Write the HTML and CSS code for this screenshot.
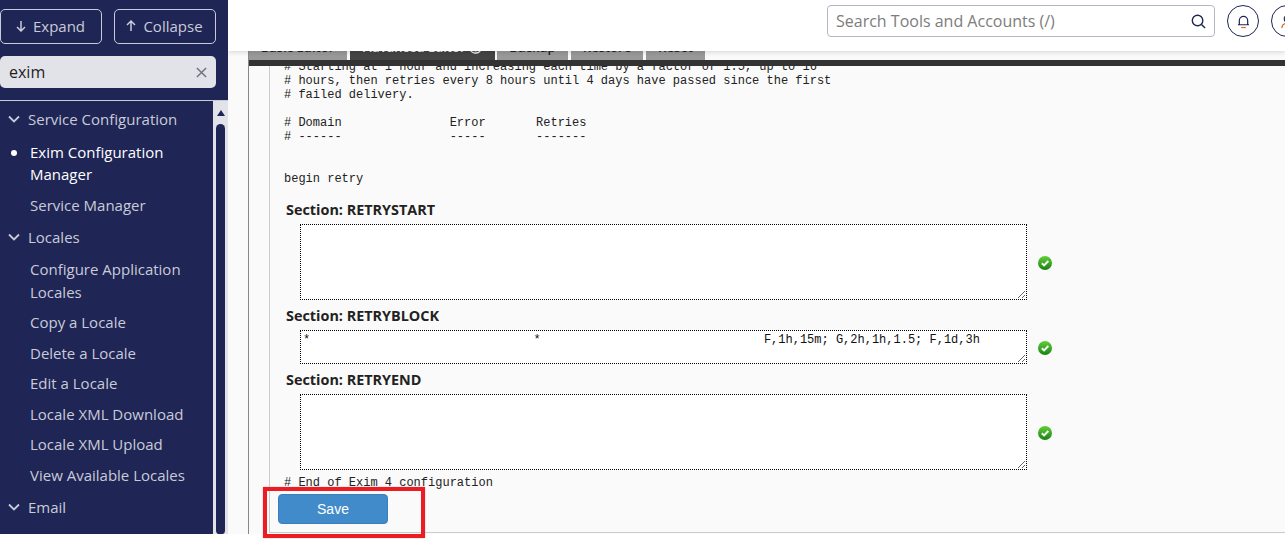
FILE: index.html
```html
<!DOCTYPE html>
<html lang="en">
<head>
<meta charset="utf-8">
<title>Exim Configuration Manager</title>
<link rel="stylesheet" href="styles.css">
</head>
<body>
<div class="app">
  <aside class="sidebar">
    <div class="side-head">
      <div class="side-actions">
        <button class="side-btn"><svg class="arrow" viewBox="0 0 12 12"><path d="M6 1v10M2 7l4 4 4-4"/></svg>Expand</button>
        <button class="side-btn"><svg class="arrow" viewBox="0 0 12 12"><path d="M6 11V1M2 5l4-4 4 4"/></svg>Collapse</button>
      </div>
      <div class="side-search">
        <span>exim</span>
        <svg class="clear" viewBox="0 0 12 12"><path d="M1 1l10 10M11 1L1 11"/></svg>
      </div>
    </div>
    <div class="side-body">
      <ul class="nav">
        <li class="nav-section nav-first"><svg class="chev" viewBox="0 0 12 8"><path d="M1 1.5l5 5 5-5"/></svg>Service Configuration</li>
        <li class="nav-item active">Exim Configuration Manager</li>
        <li class="nav-item">Service Manager</li>
        <li class="nav-section"><svg class="chev" viewBox="0 0 12 8"><path d="M1 1.5l5 5 5-5"/></svg>Locales</li>
        <li class="nav-item">Configure Application Locales</li>
        <li class="nav-item">Copy a Locale</li>
        <li class="nav-item">Delete a Locale</li>
        <li class="nav-item">Edit a Locale</li>
        <li class="nav-item">Locale XML Download</li>
        <li class="nav-item">Locale XML Upload</li>
        <li class="nav-item">View Available Locales</li>
        <li class="nav-section"><svg class="chev" viewBox="0 0 12 8"><path d="M1 1.5l5 5 5-5"/></svg>Email</li>
      </ul>
      <div class="scrollbar">
        <div class="scroll-up"></div>
        <div class="scroll-thumb"></div>
      </div>
    </div>
  </aside>
  <main class="main">
    <header class="topbar">
      <div class="top-search">
        <span class="top-placeholder">Search Tools and Accounts (/)</span>
        <svg class="top-glass" viewBox="0 0 16 16"><circle cx="7" cy="7" r="5.6"/><path d="M11.2 11.2L15 15"/></svg>
      </div>
      <div class="round-btn"><svg class="bell" viewBox="0 0 14 16"><path class="bell-body" d="M2.5 11.5V7a4.5 4.5 0 0 1 9 0v4.5M1 11.5h12"/><path class="bell-clap" d="M4.5 14.5h5"/></svg></div>
      <div class="round-btn"><svg class="user" viewBox="0 0 14 16"><circle class="bell-body" cx="7" cy="5" r="3.5"/><path class="bell-clap" d="M1 15c0-3.5 2.5-5 6-5s6 1.500 6 5"/></svg></div>
    </header>
    <div class="panel">
      <nav class="tabs">
        <span class="tab tab-basic">Basic Editor</span>
        <span class="tab tab-adv">Advanced Editor ⓘ</span>
        <span class="tab tab-backup">Backup</span>
        <span class="tab tab-restore">Restore</span>
        <span class="tab tab-reset">Reset</span>
      </nav>
      <div class="tab-rule"></div>
      <div class="editor-wrap">
        <form class="editor">
<pre class="code"># Starting at 1 hour and increasing each time by a factor of 1.5, up to 16
# hours, then retries every 8 hours until 4 days have passed since the first
# failed delivery.

# Domain               Error       Retries
# ------               -----       -------


begin retry</pre>
          <h4 class="sec-title sec-first">Section: RETRYSTART</h4>
          <div class="sec-row">
            <textarea class="sec-input tall"></textarea>
            <svg class="ok" viewBox="0 0 14 14"><defs><linearGradient id="g1" x1="0" y1="0" x2="0" y2="1"><stop offset="0" stop-color="#62d038"/><stop offset="1" stop-color="#168210"/></linearGradient></defs><circle cx="7" cy="7" r="7" fill="url(#g1)"/><path class="ok-tick" d="M3.8 7.200l2.300 2.200 4.200-4.400"/></svg>
          </div>
          <h4 class="sec-title sec-second">Section: RETRYBLOCK</h4>
          <div class="sec-row">
            <textarea class="sec-input short">*                               *                               F,1h,15m; G,2h,1h,1.5; F,1d,3h</textarea>
            <svg class="ok" viewBox="0 0 14 14"><circle cx="7" cy="7" r="7" fill="url(#g1)"/><path class="ok-tick" d="M3.8 7.200l2.300 2.200 4.200-4.400"/></svg>
          </div>
          <h4 class="sec-title sec-third">Section: RETRYEND</h4>
          <div class="sec-row">
            <textarea class="sec-input tall"></textarea>
            <svg class="ok" viewBox="0 0 14 14"><circle cx="7" cy="7" r="7" fill="url(#g1)"/><path class="ok-tick" d="M3.8 7.200l2.300 2.200 4.200-4.400"/></svg>
          </div>
<pre class="code code-end"># End of Exim 4 configuration</pre>
          <button type="button" class="save">Save</button>
        </form>
      </div>
    </div>
  </main>
  <div class="annotation"></div>
</div>
</body>
</html>
```
FILE: styles.css
```css
* { box-sizing: border-box; }
html, body { margin: 0; padding: 0; height: 539px; overflow: hidden; background: #fff; }
body { font-family: "Open Sans", "Liberation Sans", sans-serif; }

.app { position: relative; display: flex; height: 534px; }

/* Sidebar */
.sidebar { flex: 0 0 228px; display: flex; flex-direction: column; background: #1f2555; color: #c9cbd8; }
.side-head { height: 101px; padding: 9px 12px 0 0; border-bottom: 1px solid #c9cbd8; }
.side-actions { display: flex; justify-content: space-between; }
.side-btn { width: 102px; height: 35px; display: flex; align-items: center; justify-content: center; gap: 6px; background: transparent; border: 1px solid #c9cbd8; border-radius: 5px; color: #c9cbd8; font: 15px "Open Sans", sans-serif; padding: 0 0 1px; }
.arrow { width: 12px; height: 12px; margin-left: -2px; fill: none; stroke: #c9cbd8; stroke-width: 1.500; }
.side-search { margin-top: 12px; height: 32px; display: flex; align-items: center; justify-content: space-between; padding: 0 9px; background: #e1e3e8; border-radius: 5px; color: #1d1d22; font-size: 16px; }
.clear { width: 11px; height: 11px; fill: none; stroke: #70737f; stroke-width: 1.600; }
.side-body { flex: 1; display: flex; min-height: 0; }
.nav { flex: 1; list-style: none; margin: 0; padding: 2.500px 0 0; font-size: 15px; line-height: 22.500px; overflow: hidden; }
.nav-section { height: 33.500px; display: flex; align-items: center; padding-left: 8px; gap: 8px; }
.nav-first { padding-bottom: 2px; }
.chev { width: 12px; height: 8px; flex: none; fill: none; stroke: #c9cbd8; stroke-width: 1.800; }
.nav-item { position: relative; padding: 4px 15px 4px 30px; }
.nav-item.active { color: #fff; line-height: 22px; padding-bottom: 5px; }
.nav-item.active::before { content: ""; position: absolute; left: 11px; top: 13px; width: 6px; height: 6px; border-radius: 50%; background: #fff; }
.scrollbar { flex: 0 0 15px; display: flex; flex-direction: column; align-items: center; background: #e1e3e9; padding-top: 9px; }
.scroll-up { width: 0; height: 0; border-left: 4.500px solid transparent; border-right: 4.500px solid transparent; border-bottom: 6px solid #1f2555; }
.scroll-thumb { flex: 1; width: 9px; margin-top: 8px; background: #1f2555; border-radius: 5px 5px 4px 4px; }

/* Main */
.main { flex: 1; min-width: 0; display: flex; flex-direction: column; background: #fafafa; }
.topbar { position: relative; z-index: 2; flex: 0 0 51px; display: flex; align-items: flex-start; gap: 12px; padding: 5px 0 0 599px; background: #fff; box-shadow: 0 1px 5px rgba(0, 0, 0, .16); overflow: hidden; clip-path: inset(0 0 -8px 0); }
.top-search { flex: 0 0 388px; height: 32px; display: flex; align-items: center; justify-content: space-between; padding: 0 8px; border: 1px solid #b4b6c6; border-radius: 4px; }
.top-placeholder { font-size: 16px; color: #7d7d7d; }
.top-glass { width: 15px; height: 15px; fill: none; stroke: #1f2555; stroke-width: 1.500; }
.round-btn { flex: 0 0 32px; height: 32px; display: flex; align-items: center; justify-content: center; border: 1px solid #1f2555; border-radius: 50%; }
.bell, .user { width: 13px; height: 15px; fill: none; stroke-width: 1.300; }
.bell-body { stroke: #1f2555; }
.bell-clap { stroke: #d9662a; }

/* Panel */
.panel { flex: 1; min-height: 0; margin-left: 20px; border-left: 1px solid #888; display: flex; flex-direction: column; overflow: hidden; }
.tabs { flex: none; display: flex; height: 24px; margin-top: -15px; margin-left: -1px; font-size: 13px; font-weight: 600; line-height: 23px; }
.tab { text-align: center; background: #999; color: #222; white-space: nowrap; overflow: hidden; }
.tab-basic { width: 99px; }
.tab-adv { width: 145px; margin-left: 3px; background: #444; color: #eee; }
.tab-backup { width: 71px; margin-left: 2px; }
.tab-restore { width: 72px; margin-left: 3px; }
.tab-reset { width: 59px; margin-left: 3px; }
.tab-rule { flex: 0 0 6px; margin-left: -1px; background: #333; }
.editor-wrap { flex: 1; min-height: 0; overflow: hidden; padding-left: 20px; }
.editor { display: flow-root; height: 467px; padding-left: 8px; border-left: 1px solid #ccc; border-bottom: 1px solid #ccc; }
.code { margin: -6px 0 0; padding-left: 6px; font: 12px/14px "Liberation Mono", "Courier New", monospace; color: #222; }
.code-end { margin-top: 6px; }
.sec-title { margin: 0 0 4px 8px; font-size: 14.400px; line-height: 20px; font-weight: 700; color: #222; }
.sec-first { margin-top: 14px; }
.sec-second { margin-top: 6px; margin-bottom: 4px; }
.sec-third { margin-top: 6px; }
.sec-row { display: flex; align-items: center; gap: 11px; padding-left: 22px; }
.sec-input { width: 727px; margin: 0; padding: 2px; border: 1px dotted #000; border-radius: 0; background: #fff; outline: none; font: 12px/14px "Liberation Mono", "Courier New", monospace; color: #111; white-space: pre; overflow: hidden; }
.tall { height: 76px; }
.short { height: 34px; }
.ok { flex: none; width: 14px; height: 14px; margin-top: 2px; }
.ok-tick { fill: none; stroke: #fff; stroke-width: 2; }
.save { display: block; width: 110px; height: 30px; margin-top: 4px; padding: 0; border: 1px solid #3a7fbd; border-radius: 4px; background: #428bca; color: #fff; font: 14px "Liberation Sans", Arial, sans-serif; }

/* Screenshot annotation lying over the page */
.annotation { position: absolute; left: 263px; top: 487px; width: 162px; height: 51px; border: 4px solid #ec1c24; box-shadow: 0 0 1px rgba(236, 28, 36, .5); z-index: 3; }
```
